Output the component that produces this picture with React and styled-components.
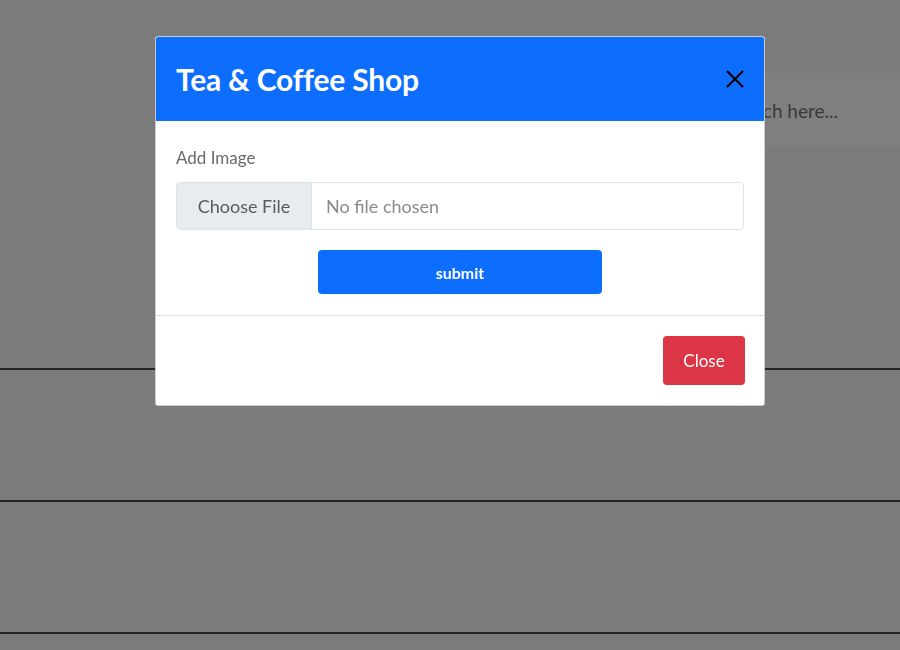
import React from "react";
import styled, { createGlobalStyle } from "styled-components";

const GlobalStyle = createGlobalStyle`
    html, body {
        margin: 0;
        padding: 0;
        background: #7b7b7c;
        font-family: "Lato", "Open Sans", sans-serif;
    }
`;

const Page = styled.div`
    height: 650px;
    overflow: hidden;
    padding-top: 73px;
    box-sizing: border-box;
`;

const SearchBar = styled.div`
    margin-left: auto;
    width: 300px;
    height: 74px;
    background: #7f7f80;
    display: flex;
    align-items: center;
    justify-content: flex-end;
    padding-right: 62px;
    box-sizing: border-box;
    color: #3a3a3d;
    font-size: 19px;
`;

const Table = styled.div`
    margin-top: 221px;
`;

const Row = styled.div`
    height: 132px;
    border-top: 2px solid #242426;
    box-sizing: border-box;
`;

const Overlay = styled.div`
    position: fixed;
    inset: 0;
    padding: 36px 0 0 155px;
`;

const Modal = styled.div`
    width: 610px;
    background: #fff;
    border: 1px solid rgba(0, 0, 0, 0.2);
    border-radius: 3px;
    overflow: hidden;
    box-sizing: border-box;
`;

const Header = styled.div`
    height: 84px;
    background: #0d6efd;
    display: flex;
    align-items: center;
    justify-content: space-between;
    padding: 0 19px 0 20px;
`;

const Title = styled.h5`
    margin: 0;
    color: #fff;
    font-size: 30px;
    font-weight: 700;
    letter-spacing: -0.2px;
`;

const CloseIcon = styled.button`
    background: none;
    border: 0;
    padding: 0;
    display: flex;
    cursor: pointer;
`;

const Body = styled.div`
    padding: 25px 20px 21px;
    border-bottom: 1px solid #dee2e6;
`;

const Label = styled.label`
    display: block;
    font-size: 17px;
    line-height: 24px;
    color: #6a6a6d;
    margin-bottom: 12px;
`;

const FileInput = styled.div`
    display: flex;
    height: 48px;
    border: 1px solid #dee2e6;
    border-radius: 4px;
    overflow: hidden;
    box-sizing: border-box;
    font-size: 18px;
`;

const FileButton = styled.div`
    width: 134px;
    background: #e9ecef;
    border-right: 1px solid #dee2e6;
    color: #5a5a5d;
    display: flex;
    align-items: center;
    justify-content: center;
`;

const FileName = styled.div`
    flex: 1;
    display: flex;
    align-items: center;
    padding-left: 14px;
    color: #8a8a8d;
`;

const Btn = styled.button`
    border: 0;
    border-radius: 4px;
    color: #fff;
    font-family: inherit;
    cursor: pointer;
    background: ${(p) => (p.$variant === "danger" ? "#dc3545" : "#0d6efd")};
    font-size: ${(p) => (p.$variant === "danger" ? "17px" : "16px")};
    font-weight: ${(p) => (p.$variant === "danger" ? 400 : 700)};
`;

const Submit = styled(Btn)`
    display: block;
    margin: 20px auto 0;
    width: 284px;
    height: 44px;
`;

const Footer = styled.div`
    display: flex;
    justify-content: flex-end;
    padding: 20px 19px 20px 20px;
`;

const CloseBtn = styled(Btn)`
    width: 82px;
    height: 49px;
`;

export default function App() {
    return (
        <>
            <GlobalStyle />
            <Page>
                <SearchBar>Search here...</SearchBar>
                <Table>
                    <Row />
                    <Row />
                    <Row />
                </Table>
            </Page>
            <Overlay>
                <Modal>
                    <Header>
                        <Title>Tea &amp; Coffee Shop</Title>
                        <CloseIcon aria-label="Close">
                            <svg width="20" height="20" viewBox="0 0 20 20">
                                <path d="M2 2 L18 18 M18 2 L2 18" stroke="#000" strokeWidth="2.2" />
                            </svg>
                        </CloseIcon>
                    </Header>
                    <Body>
                        <Label>Add Image</Label>
                        <FileInput>
                            <FileButton>Choose File</FileButton>
                            <FileName>No file chosen</FileName>
                        </FileInput>
                        <Submit>submit</Submit>
                    </Body>
                    <Footer>
                        <CloseBtn $variant="danger">Close</CloseBtn>
                    </Footer>
                </Modal>
            </Overlay>
        </>
    );
}
